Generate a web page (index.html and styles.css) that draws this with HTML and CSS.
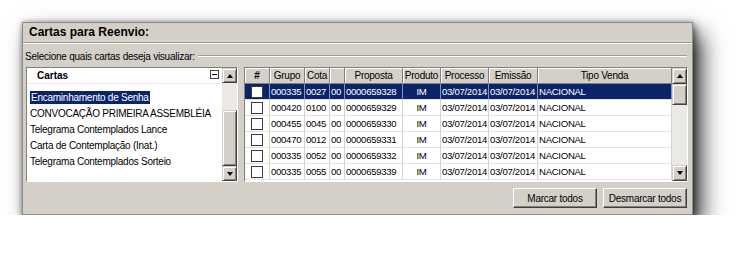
FILE: index.html
```html
<!DOCTYPE html>
<html lang="pt">
<head>
<meta charset="utf-8">
<title>Cartas para Reenvio</title>
<link rel="stylesheet" href="styles.css">
</head>
<body>
<div class="page">
  <div class="window">
    <div class="title">Cartas para Reenvio:</div>
    <div class="legend"><span class="legend-text">Selecione quais cartas deseja visualizar:</span><span class="rule"></span></div>
    <div class="content">
      <div class="listbox">
        <div class="list-main">
          <div class="list-head"><span class="list-title">Cartas</span><span class="minus"></span></div>
          <ul class="items">
            <li><span class="sel">Encaminhamento de Senha</span></li>
            <li>CONVOCAÇÃO PRIMEIRA ASSEMBLÉIA</li>
            <li>Telegrama Contemplados Lance</li>
            <li>Carta de Contemplação (Inat.)</li>
            <li>Telegrama Contemplados Sorteio</li>
          </ul>
        </div>
        <div class="vscroll">
          <div class="sb-btn"><span class="arrow-up"></span></div>
          <div class="sb-track"></div>
          <div class="sb-thumb left-thumb"></div>
          <div class="sb-btn"><span class="arrow-down"></span></div>
        </div>
      </div>
      <div class="grid">
        <table class="tbl">
          <colgroup>
            <col class="c-chk"><col class="c-grupo"><col class="c-cota"><col class="c-blank"><col class="c-prop"><col class="c-prod"><col class="c-proc"><col class="c-emis"><col class="c-tipo">
          </colgroup>
          <thead>
            <tr><th class="hash">#</th><th>Grupo</th><th>Cota</th><th></th><th>Proposta</th><th>Produto</th><th>Processo</th><th>Emissão</th><th>Tipo Venda</th></tr>
          </thead>
          <tbody>
            <tr class="selected"><td><span class="cb"></span></td><td>000335</td><td>0027</td><td>00</td><td>0000659328</td><td class="ctr">IM</td><td>03/07/2014</td><td>03/07/2014</td><td>NACIONAL</td></tr>
            <tr><td><span class="cb"></span></td><td>000420</td><td>0100</td><td>00</td><td>0000659329</td><td class="ctr">IM</td><td>03/07/2014</td><td>03/07/2014</td><td>NACIONAL</td></tr>
            <tr><td><span class="cb"></span></td><td>000455</td><td>0045</td><td>00</td><td>0000659330</td><td class="ctr">IM</td><td>03/07/2014</td><td>03/07/2014</td><td>NACIONAL</td></tr>
            <tr><td><span class="cb"></span></td><td>000470</td><td>0012</td><td>00</td><td>0000659331</td><td class="ctr">IM</td><td>03/07/2014</td><td>03/07/2014</td><td>NACIONAL</td></tr>
            <tr><td><span class="cb"></span></td><td>000335</td><td>0052</td><td>00</td><td>0000659332</td><td class="ctr">IM</td><td>03/07/2014</td><td>03/07/2014</td><td>NACIONAL</td></tr>
            <tr><td><span class="cb"></span></td><td>000335</td><td>0055</td><td>00</td><td>0000659339</td><td class="ctr">IM</td><td>03/07/2014</td><td>03/07/2014</td><td>NACIONAL</td></tr>
          </tbody>
        </table>
        <div class="vscroll">
          <div class="sb-btn tall"><span class="arrow-up"></span></div>
          <div class="sb-thumb right-thumb"></div>
          <div class="sb-track"></div>
          <div class="sb-btn tall"><span class="arrow-down"></span></div>
        </div>
      </div>
    </div>
    <div class="actions">
      <button class="btn" type="button">Marcar todos</button>
      <button class="btn" type="button">Desmarcar todos</button>
    </div>
  </div>
</div>
</body>
</html>
```
FILE: styles.css
```css
html, body {
  margin: 0;
  background: #fff;
}
body {
  font-family: "Liberation Sans", Arial, sans-serif;
  font-size: 10px;
  letter-spacing: -0.25px;
  color: #000;
}
.page {
  padding: 22px 0 0 22px;
}
.window {
  width: 671px;
  height: 193px;
  box-sizing: border-box;
  background: #d4d0c8;
  border: 1px solid #8e8a84;
  box-shadow: 9px 12px 22px rgba(0, 0, 0, 0.75), 3px 4px 8px rgba(0, 0, 0, 0.45), 0 0 5px rgba(0, 0, 0, 0.3);
  display: flex;
  flex-direction: column;
}
.title {
  height: 19px;
  line-height: 19px;
  padding-left: 6px;
  font-size: 12px;
  font-weight: bold;
  letter-spacing: 0;
  border-bottom: 1px solid #a09c94;
  box-shadow: 0 1px 0 #fff;
}
.legend {
  display: flex;
  align-items: center;
  height: 16px;
  margin-top: 5px;
  padding-left: 2px;
}
.legend-text {
  white-space: nowrap;
}
.rule {
  flex: 1;
  height: 0;
  border-top: 1px solid #a09c94;
  border-bottom: 1px solid #fff;
  margin: 0 5px 0 3px;
}
.content {
  display: flex;
  gap: 6px;
  height: 115px;
  margin: 3px 0 0 3px;
}
.listbox {
  width: 212px;
  box-sizing: border-box;
  border: 1px solid;
  border-color: #808080 #fff #fff #808080;
  background: #fff;
  display: flex;
}
.list-main {
  flex: 1;
  display: flex;
  flex-direction: column;
}
.list-head {
  height: 15px;
  border-bottom: 1px solid #ebebeb;
  display: flex;
  align-items: center;
  justify-content: space-between;
  padding: 0 3px 0 10px;
}
.list-title {
  font-weight: bold;
  letter-spacing: 0;
}
.minus {
  width: 9px;
  height: 9px;
  box-sizing: border-box;
  border: 1px solid #404040;
  position: relative;
  margin-top: -2px;
}
.minus::after {
  content: "";
  position: absolute;
  left: 1px;
  right: 1px;
  top: 3px;
  height: 1px;
  background: #000;
}
.items {
  list-style: none;
  margin: 6px 0 0 0;
  padding: 0 0 0 3px;
}
.items li {
  height: 16px;
  line-height: 16px;
  white-space: nowrap;
}
.sel {
  background: #0a246a;
  color: #fff;
  padding: 1px 1px;
}
.vscroll {
  width: 15px;
  display: flex;
  flex-direction: column;
  flex-shrink: 0;
}
.sb-btn, .sb-thumb {
  box-sizing: border-box;
  background: #d4d0c8;
  border: 1px solid;
  border-color: #d4d0c8 #404040 #404040 #d4d0c8;
  box-shadow: inset 1px 1px #fff, inset -1px -1px #808080;
}
.sb-btn {
  height: 15px;
  display: flex;
  align-items: center;
  justify-content: center;
}
.sb-btn.tall {
  height: 16px;
}
.sb-track {
  flex: 1;
  background: #ebe9e4;
}
.left-thumb {
  height: 56px;
}
.right-thumb {
  height: 21px;
}
.arrow-up, .arrow-down {
  width: 0;
  height: 0;
  border-left: 3px solid transparent;
  border-right: 3px solid transparent;
}
.arrow-up {
  border-bottom: 4px solid #000;
}
.arrow-down {
  border-top: 4px solid #000;
}
.grid {
  width: 444px;
  box-sizing: border-box;
  border: 1px solid;
  border-color: #808080 #fff #fff #808080;
  background: #fff;
  display: flex;
}
.tbl {
  width: 427px;
  table-layout: fixed;
  border-collapse: separate;
  border-spacing: 0;
  align-self: flex-start;
}
.c-chk { width: 25px; }
.c-grupo { width: 35px; }
.c-cota { width: 25px; }
.c-blank { width: 15px; }
.c-prop { width: 58px; }
.c-prod { width: 38px; }
.c-proc { width: 48px; }
.c-emis { width: 49px; }
.c-tipo { width: 134px; }
.tbl tr {
  height: 16px;
}
.tbl th {
  background: #d4d0c8;
  font-weight: normal;
  padding: 0;
  text-align: center;
  border-right: 1px solid #808080;
  border-bottom: 1px solid #808080;
  box-shadow: inset 1px 1px #fff;
  white-space: nowrap;
  overflow: hidden;
}
.tbl th.hash {
  font-weight: bold;
}
.tbl td {
  padding: 0 0 0 1px;
  font-size: 9.6px;
  letter-spacing: -0.3px;
  border-right: 1px solid #d4d4d4;
  border-bottom: 1px solid #e2e2e2;
  white-space: nowrap;
  overflow: hidden;
  line-height: 14px;
}
.tbl td.ctr {
  text-align: center;
  padding: 0;
}
.tbl tr.selected td {
  background: #0a246a;
  color: #fff;
  border-right-color: #8193bf;
}
.cb {
  display: block;
  width: 12px;
  height: 12px;
  box-sizing: border-box;
  border: 1px solid #3a3a3a;
  background: #fff;
  margin: 0 auto 0 5px;
}
.actions {
  display: flex;
  justify-content: flex-end;
  gap: 6px;
  margin: 6px 5px 0 0;
}
.btn {
  width: 84px;
  height: 20px;
  box-sizing: border-box;
  font: inherit;
  letter-spacing: -0.25px;
  color: #000;
  background: #d4d0c8;
  border: 1px solid;
  border-color: #fff #404040 #404040 #fff;
  box-shadow: inset -1px -1px #808080;
  padding: 0;
}
```
